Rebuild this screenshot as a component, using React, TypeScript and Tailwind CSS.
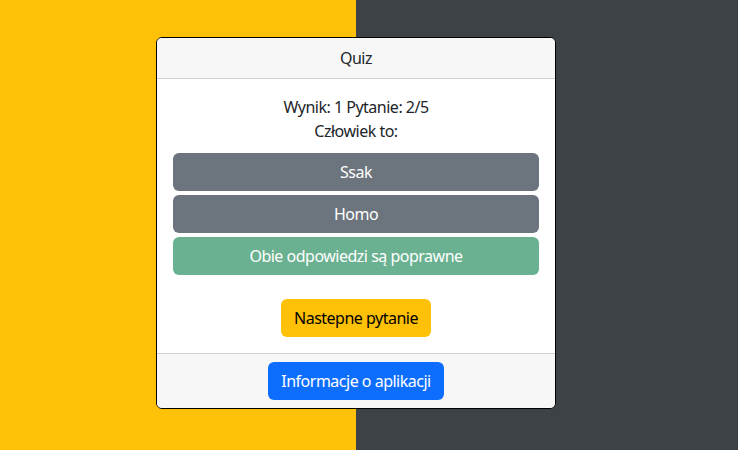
export default function App() {
  const answers = [
    { label: 'Ssak', cls: 'bg-[#6c757d]' },
    { label: 'Homo', cls: 'bg-[#6c757d]' },
    { label: 'Obie odpowiedzi są poprawne', cls: 'bg-[#69b190]' },
  ]

  return (
    <div
      className="h-[450px] w-full bg-[linear-gradient(to_right,#ffc107_356px,#3d4246_356px)] text-[16px] tracking-[-0.5px] text-[#212529]"
      style={{ fontFamily: '"Segoe UI", "Noto Sans", sans-serif' }}
    >
      <div className="w-[712px] flex justify-center pt-[37px]">
        {/* Card */}
        <div className="w-[400px] bg-white border border-black rounded-[6px] overflow-hidden flex flex-col">
          <div className="bg-[#f7f7f7] border-b border-[#d0d0d0] py-2 text-center leading-6">Quiz</div>

          <div className="p-4 flex flex-col items-center">
            <p className="leading-6">Wynik: 1 Pytanie: 2/5</p>
            <p className="leading-6">Człowiek to:</p>

            <div className="w-full mt-[10px] flex flex-col gap-1">
              {answers.map((a) => (
                <button
                  key={a.label}
                  className={`${a.cls} w-full h-[38px] rounded-[6px] text-white leading-6`}
                >
                  {a.label}
                </button>
              ))}
            </div>

            <button className="mt-6 h-[38px] w-[150px] rounded-[6px] bg-[#ffc107] text-black leading-6">
              Nastepne pytanie
            </button>
          </div>

          <div className="bg-[#f7f7f7] border-t border-[#d0d0d0] py-2 flex justify-center">
            <button className="h-[38px] w-[176px] rounded-[6px] bg-[#0d6efd] text-white leading-6">
              Informacje o aplikacji
            </button>
          </div>
        </div>
      </div>
    </div>
  )
}
